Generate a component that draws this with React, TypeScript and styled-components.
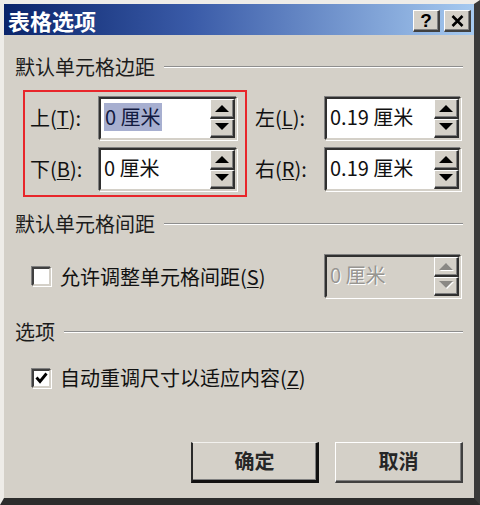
import React from 'react';
import styled, { createGlobalStyle } from 'styled-components';

const FACE = '#d4d0c8';

const GlobalStyle = createGlobalStyle`
  html, body { margin: 0; padding: 0; background: ${FACE}; }
  body { font-family: "Noto Sans CJK SC", "Liberation Sans", sans-serif; }
  * { box-sizing: border-box; }
`;

const Window = styled.div`
  width: 480px;
  height: 505px;
  background: ${FACE};
  border-style: solid;
  border-width: 4px 6px 7px 4px;
  border-color: #eeece8 #3a3a3a #2c2c2c #eeece8;
  display: flex;
  flex-direction: column;
  color: #111;
`;

const TitleBar = styled.div`
  height: 31px;
  flex: none;
  display: flex;
  align-items: center;
  padding: 3px 3px 0 4px;
  background: linear-gradient(90deg, #0a246a 0%, #3a5ba8 40%, #a6caf0 100%);
`;

const Title = styled.div`
  flex: 1;
  color: #fff;
  font-weight: 700;
  font-size: 22px;
  line-height: 1;
  margin-top: -3px;
`;

const CaptionButton = styled.button`
  width: 27px;
  height: 22px;
  margin-left: 4px;
  padding: 0;
  background: ${FACE};
  border-style: solid;
  border-width: 1px 2px 2px 1px;
  border-color: #fff #404040 #404040 #fff;
  box-shadow: inset -1px -1px #808080;
  display: flex;
  align-items: center;
  justify-content: center;
  font: 700 19px "Liberation Sans", sans-serif;
  color: #000;
`;

const Body = styled.div`
  flex: 1;
  display: flex;
  flex-direction: column;
  padding: 22px 11px 15px 11px;
`;

const GroupHeader = styled.div<{ $top?: number }>`
  display: flex;
  align-items: center;
  gap: 9px;
  height: 20px;
  margin-top: ${p => p.$top ?? 0}px;
  font-size: 20px;
  line-height: 20px;
  color: #1c1c1c;
  white-space: nowrap;

  &::after {
    content: '';
    flex: 1;
    border-top: 1px solid #8e8e8e;
    border-bottom: 1px solid #fff;
  }
`;

const MarginGrid = styled.div`
  display: flex;
  gap: 8px;
  margin: 13px 0 0 8px;
`;

const Highlight = styled.div`
  border: 2px solid #e8262b;
  padding: 5px 8px 4px 5px;
  display: flex;
  flex-direction: column;
  gap: 8px;
`;

const Column = styled.div`
  padding-top: 7px;
  display: flex;
  flex-direction: column;
  gap: 8px;
`;

const FieldRow = styled.div`
  display: flex;
  align-items: center;
  height: 43px;
`;

const FieldLabel = styled.label<{ $w: number }>`
  width: ${p => p.$w}px;
  font-size: 20px;
  line-height: 1;
  white-space: nowrap;
  padding-bottom: 2px;
`;

const Key = styled.span`
  text-decoration: underline;
  text-underline-offset: 2px;
  text-decoration-thickness: 1px;
`;

const SpinBox = styled.div<{ $w: number; $disabled?: boolean }>`
  width: ${p => p.$w}px;
  height: 43px;
  display: flex;
  background: ${p => (p.$disabled ? FACE : '#fff')};
  border-style: solid;
  border-width: 2px;
  border-color: #303030 ${FACE} ${FACE} #303030;
  box-shadow: -1px -1px 0 #808080, 1px 1px 0 #fff;
`;

const SpinText = styled.div<{ $disabled?: boolean }>`
  flex: 1;
  display: flex;
  align-items: center;
  padding: 0 0 3px 3px;
  font-size: 20px;
  line-height: 1;
  white-space: nowrap;
  color: ${p => (p.$disabled ? '#979591' : '#111')};
  text-shadow: ${p => (p.$disabled ? '1px 1px 0 #fff' : 'none')};
`;

const Selected = styled.span`
  background: #a7afd0;
  color: #121a40;
  padding: 4px 1px;
`;

const Spinner = styled.div`
  width: 25px;
  display: flex;
  flex-direction: column;
`;

const SpinButton = styled.div`
  flex: 1;
  display: flex;
  align-items: center;
  justify-content: center;
  background: ${FACE};
  border-style: solid;
  border-width: 1px 2px 2px 1px;
  border-color: #fff #303030 #303030 #fff;
  box-shadow: inset -1px -1px #808080;
`;

const OptionRow = styled.div`
  display: flex;
  align-items: center;
  justify-content: space-between;
  margin-top: 21px;
  padding-right: 2px;
`;

const CheckRow = styled.label<{ $top?: number }>`
  display: flex;
  align-items: center;
  gap: 9px;
  padding-left: 17px;
  margin-top: ${p => p.$top ?? 0}px;
  font-size: 20px;
  line-height: 1;
  white-space: nowrap;
`;

const CheckBox = styled.span`
  width: 19px;
  height: 19px;
  flex: none;
  background: #fff;
  border-style: solid;
  border-width: 2px;
  border-color: #404040 ${FACE} ${FACE} #404040;
  box-shadow: -1px -1px 0 #808080, 1px 1px 0 #fff;
  display: flex;
  align-items: center;
  justify-content: center;
`;

const ButtonBar = styled.div`
  margin-top: auto;
  display: flex;
  justify-content: flex-end;
  gap: 16px;
`;

const PushButton = styled.button<{ $default?: boolean }>`
  width: 128px;
  height: 41px;
  padding: 0 0 3px 0;
  background: ${FACE};
  font-family: "Noto Sans CJK SC", sans-serif;
  font-size: 20px;
  font-weight: 700;
  color: #262626;
  border-style: solid;
  border-width: ${p => (p.$default ? '1px 3px 3px 2px' : '1px 2px 2px 1px')};
  border-color: ${p =>
    p.$default ? '#f2f1ee #111 #111 #2a2a2a' : '#fff #404040 #404040 #fff'};
  box-shadow: inset -1px -1px #808080;
`;

const Arrow = ({ up, disabled }: { up?: boolean; disabled?: boolean }) => (
  <svg width="16" height="9" viewBox="0 0 16 9">
    {disabled && (
      <polygon
        points={up ? '2,9 9,2 16,9' : '2,1 16,1 9,8'}
        fill="#fff"
      />
    )}
    <polygon
      points={up ? '1,8 8,1 15,8' : '1,0 15,0 8,7'}
      fill={disabled ? '#8a8884' : '#000'}
    />
  </svg>
);

const Spin = ({ w, value, selected, disabled }: { w: number; value: string; selected?: boolean; disabled?: boolean }) => (
  <SpinBox $w={w} $disabled={disabled}>
    <SpinText $disabled={disabled}>{selected ? <Selected>{value}</Selected> : value}</SpinText>
    <Spinner>
      <SpinButton><Arrow up disabled={disabled} /></SpinButton>
      <SpinButton><Arrow disabled={disabled} /></SpinButton>
    </Spinner>
  </SpinBox>
);

export default function App() {
  return (
    <>
      <GlobalStyle />
      <Window>
        <TitleBar>
          <Title>表格选项</Title>
          <CaptionButton>?</CaptionButton>
          <CaptionButton>
            <svg width="13" height="12" viewBox="0 0 13 12">
              <path d="M1.5 1 L11.5 11 M11.5 1 L1.5 11" stroke="#000" strokeWidth="2.6" />
            </svg>
          </CaptionButton>
        </TitleBar>
        <Body>
          <GroupHeader>默认单元格边距</GroupHeader>
          <MarginGrid>
            <Highlight>
              <FieldRow>
                <FieldLabel $w={69}>上(<Key>T</Key>):</FieldLabel>
                <Spin w={138} value="0 厘米" selected />
              </FieldRow>
              <FieldRow>
                <FieldLabel $w={69}>下(<Key>B</Key>):</FieldLabel>
                <Spin w={138} value="0 厘米" />
              </FieldRow>
            </Highlight>
            <Column>
              <FieldRow>
                <FieldLabel $w={70}>左(<Key>L</Key>):</FieldLabel>
                <Spin w={136} value="0.19 厘米" />
              </FieldRow>
              <FieldRow>
                <FieldLabel $w={70}>右(<Key>R</Key>):</FieldLabel>
                <Spin w={136} value="0.19 厘米" />
              </FieldRow>
            </Column>
          </MarginGrid>

          <GroupHeader $top={17}>默认单元格间距</GroupHeader>
          <OptionRow>
            <CheckRow>
              <CheckBox />
              <span>允许调整单元格间距(<Key>S</Key>)</span>
            </CheckRow>
            <Spin w={136} value="0 厘米" disabled />
          </OptionRow>

          <GroupHeader $top={24}>选项</GroupHeader>
          <CheckRow $top={26}>
            <CheckBox>
              <svg width="13" height="12" viewBox="0 0 13 12">
                <path d="M1.5 5.5 L5 9.5 L11.5 1.5" stroke="#000" strokeWidth="2.8" fill="none" />
              </svg>
            </CheckBox>
            <span>自动重调尺寸以适应内容(<Key>Z</Key>)</span>
          </CheckRow>

          <ButtonBar>
            <PushButton $default>确定</PushButton>
            <PushButton>取消</PushButton>
          </ButtonBar>
        </Body>
      </Window>
    </>
  );
}
